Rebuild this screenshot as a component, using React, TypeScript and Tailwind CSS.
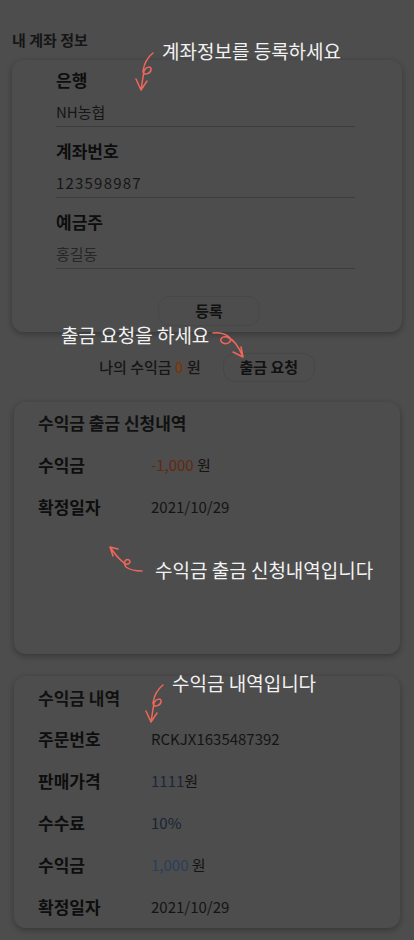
const Coral = '#f0675a'

const ArrowDown = ({ className }: { className: string }) => (
  <svg className={className} width="30" height="45" viewBox="0 0 30 45" fill="none">
    <path
      d="M22 3 C17 7 13 14 12 21 C12 26 19 24 20 20 C21 16 15 16 13 21 L10 40 M5 29 L10 40 L16 31"
      stroke={Coral}
      strokeWidth="1.5"
      strokeLinecap="round"
      strokeLinejoin="round"
    />
  </svg>
)

const ArrowRight = ({ className }: { className: string }) => (
  <svg className={className} width="45" height="40" viewBox="0 0 45 40" fill="none">
    <path
      d="M8 8 C14 7 22 9 25 13 C27 17 22 20 18 18 C13 15 17 11 22 12 C28 14 34 22 38 32 M28 27 L38 32 L36 22"
      stroke={Coral}
      strokeWidth="1.5"
      strokeLinecap="round"
      strokeLinejoin="round"
    />
  </svg>
)

const ArrowBack = ({ className }: { className: string }) => (
  <svg className={className} width="45" height="40" viewBox="0 0 45 40" fill="none">
    <path
      d="M6 6 C10 12 15 18 20 22 C24 25 28 21 25 19 C21 17 19 22 22 26 C26 29 32 30 38 30 M14 8 L6 6 L9 15"
      stroke={Coral}
      strokeWidth="1.5"
      strokeLinecap="round"
      strokeLinejoin="round"
    />
  </svg>
)

const Field = ({ label, value, className }: { label: string; value: string; className?: string }) => (
  <div className="flex flex-col">
    <div className="h-[24px] text-[17px] font-bold leading-[24px] text-[#0e0e0e]">{label}</div>
    <div
      className={`mt-[7px] flex h-[28px] items-center border-b border-[#3d3d3d] text-[15px] ${className ?? 'text-[#161616]'}`}
    >
      {value}
    </div>
  </div>
)

const Row = ({ label, children }: { label: string; children: React.ReactNode }) => (
  <div className="flex h-[42px] items-center">
    <div className="w-[113px] text-[17px] font-bold text-[#0e0e0e]">{label}</div>
    <div className="text-[15px] text-[#141414]">{children}</div>
  </div>
)

export default function App() {
  return (
    <div className="relative min-h-[940px] bg-[#4d4d4d] pt-[30px] pb-[11px] font-['Noto_Sans_CJK_KR','Noto_Sans',sans-serif]">
      <h2 className="ml-3 text-[15px] font-semibold leading-[20px] text-[#161616]">내 계좌 정보</h2>

      <div className="mx-3 mt-[10px] rounded-xl pt-[8px] pb-[6px] shadow-[0_2px_6px_rgba(0,0,0,0.3)]">
        <div className="ml-[44px] flex w-[299px] flex-col gap-[12px]">
          <Field label="은행" value="NH농협" />
          <Field label="계좌번호" value="123598987" className="tracking-[0.08em] text-[#161616]" />
          <Field label="예금주" value="홍길동" className="text-[#262626]" />
        </div>
        <div className="mt-[27px] flex justify-center">
          <button className="ml-[4px] h-[30px] w-[102px] rounded-xl border border-[#474747] text-[15px] font-bold text-[#111111]">
            등록
          </button>
        </div>
      </div>

      <div className="mt-[21px] flex items-center justify-center gap-[22px]">
        <div className="text-[15px] font-medium text-[#161616]">
          나의 수익금 <span className="text-[#7e3504]">0</span> 원
        </div>
        <button className="h-[29px] w-[92px] rounded-xl border border-[#474747] text-[15px] font-semibold text-[#111111]">
          출금 요청
        </button>
      </div>

      <div className="mx-[14px] mt-[20px] min-h-[252px] rounded-xl pl-[24px] shadow-[0_2px_6px_rgba(0,0,0,0.3)]">
        <div className="flex h-[42px] items-center text-[17px] font-semibold text-[#111111]">수익금 출금 신청내역</div>
        <Row label="수익금">
          <span className="text-[#62290f]">-1,000</span> 원
        </Row>
        <Row label="확정일자">2021/10/29</Row>
      </div>

      <div className="mx-[14px] mt-[22px] rounded-xl pl-[24px] shadow-[0_2px_6px_rgba(0,0,0,0.3)]">
        <div className="flex h-[42px] items-center pt-[2px] text-[17px] font-semibold text-[#111111]">수익금 내역</div>
        <Row label="주문번호">RCKJX1635487392</Row>
        <Row label="판매가격">
          <span className="text-[#1a2739]">1111</span>원
        </Row>
        <Row label="수수료">
          <span className="text-[#182435]">10%</span>
        </Row>
        <Row label="수익금">
          <span className="text-[#2a3f5b]">1,000</span> 원
        </Row>
        <Row label="확정일자">2021/10/29</Row>
      </div>

      <div className="absolute top-[38px] left-[162px] text-[19px] leading-[26px] text-[#f2f2f2]">계좌정보를 등록하세요</div>
      <ArrowDown className="absolute top-[50px] left-[131px]" />

      <div className="absolute top-[322px] left-[61px] text-[19px] leading-[26px] text-[#f2f2f2]">출금 요청을 하세요</div>
      <ArrowRight className="absolute top-[325px] left-[205px]" />

      <div className="absolute top-[557px] left-[155px] text-[19px] leading-[26px] text-[#f2f2f2]">수익금 출금 신청내역입니다</div>
      <ArrowBack className="absolute top-[541px] left-[104px]" />

      <div className="absolute top-[670px] left-[172px] text-[19px] leading-[26px] text-[#f2f2f2]">수익금 내역입니다</div>
      <ArrowDown className="absolute top-[682px] left-[141px]" />
    </div>
  )
}
